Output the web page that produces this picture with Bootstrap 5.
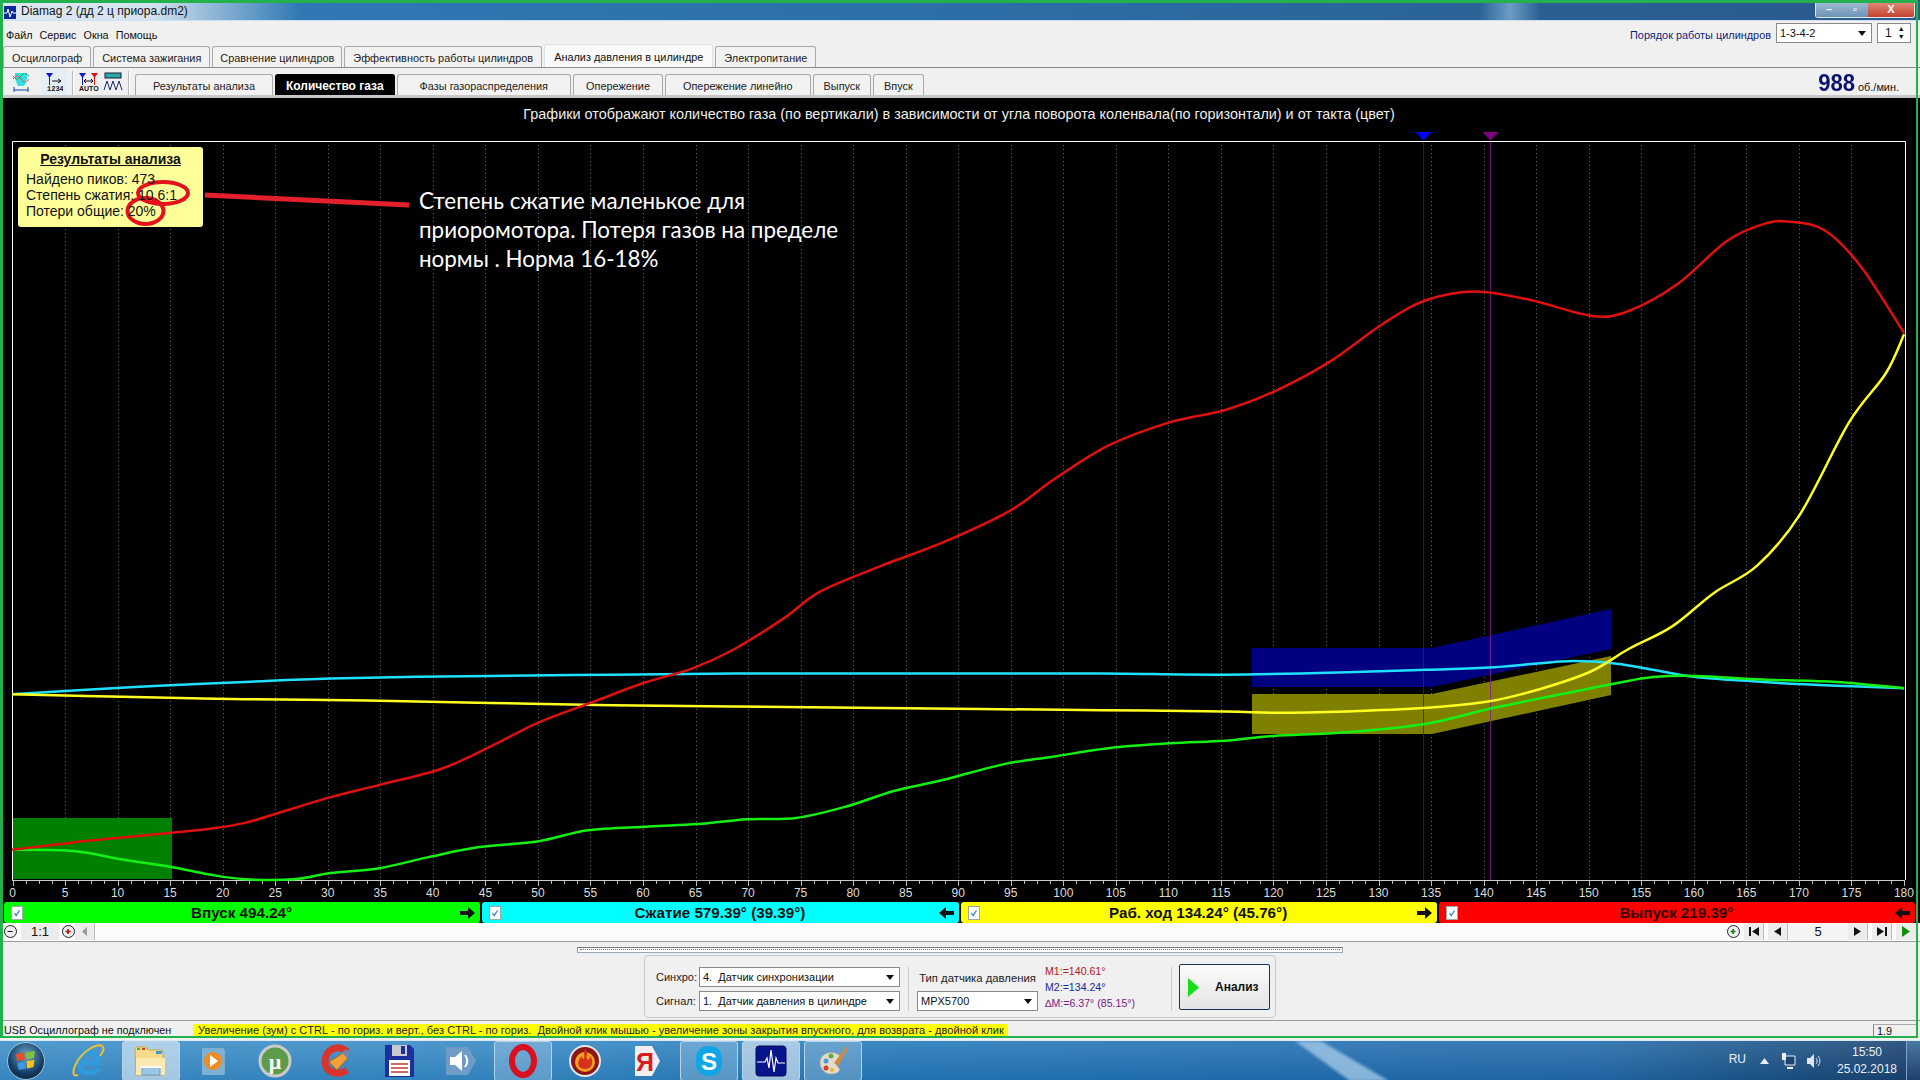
<!DOCTYPE html>
<html lang="ru">
<head>
  <meta charset="UTF-8">
  <title>Diamag 2</title>
  <link rel="stylesheet" href="https://cdn.jsdelivr.net/npm/bootstrap@5.3.0/dist/css/bootstrap.min.css">
  <style>
    html, body { margin: 0; width: 1920px; height: 1080px; overflow: hidden; background: #f0f0f0; }
    body { font-family: "Liberation Sans", Arial, sans-serif; font-size: 10.9px; color: #111; position: relative; }

    /* window chrome */
    .title-bar { height: 21px; padding-top: 2px; padding-left: 4px; background: linear-gradient(90deg, #dce8f3 0, #d5e3f0 150px, #2f78b4 300px, #2c70aa 900px, #2b6397 1480px, #6d9cc4 1510px, #2b5f94 1540px, #2b5a8e 1900px); border-bottom: 1px solid #cfe0ee; }
    .title-text { font-size: 12px; color: #111; margin-left: 5px; }
    .win-btns { height: 16px; margin-right: 5px; border: 1px solid #dfe9f2; border-top: 0; border-radius: 0 0 3px 3px; overflow: hidden; }
    .win-btns span { display: block; width: 26px; height: 100%; background: linear-gradient(#9fbbd4, #6d93b5); color: #fff; font-size: 11px; line-height: 14px; text-align: center; font-weight: bold; }
    .win-btns .win-close { width: 46px; background: linear-gradient(#e28a7d, #c4432f); }
    .menu-row { height: 25px; padding: 2px 9px 0 6px; }
    .menu-row a { color: #111; text-decoration: none; margin-right: 7px; font-size: 10.8px; }
    .order-label { color: #0d1f7a; margin-right: 5px; }
    .pick { appearance: none; -webkit-appearance: none; border-radius: 0; border: 1px solid #8a8a8a; padding: 0 3px; font-size: 11px; line-height: 16px; color: #111; background-color: #fff; background-position: right 5px center; background-size: 8px 5px; background-repeat: no-repeat; background-image: url("data:image/svg+xml,%3Csvg xmlns='http://www.w3.org/2000/svg' viewBox='0 0 8 5'%3E%3Cpath d='M0 0h8L4 5z' fill='%23111'/%3E%3C/svg%3E"); }
    .pick:focus { box-shadow: none; border-color: #8a8a8a; }
    .pick-order { width: 96px; height: 20px; }
    .spin-box { width: 34px; height: 20px; margin-left: 5px; border: 1px solid #8a8a8a; background: #fff; padding-left: 7px; line-height: 18px; font-size: 12px; }
    .spin-arrows { font-size: 7px; line-height: 8px; text-align: center; margin-top: 1px; margin-left: 6px; }

    /* tabs */
    .tab-row { height: 22px; padding-left: 3px; border-bottom: 1px solid #8c8c8c; }
    .tab-row.nav-tabs { --bs-nav-tabs-border-color: #8c8c8c; }
    .tab-row .nav-link, .tab-row2 .nav-link { height: 21px; padding: 3px 8px 0; margin: 0 2px 0 0; font-size: 10.9px; color: #222; background: #f2f2f2; border: 1px solid #a8a8a8; border-bottom: 0; border-radius: 3px 3px 0 0; white-space: nowrap; }
    .tab-row li:nth-child(3) .nav-link { padding: 3px 7px 0; }
    .tab-row .nav-link.active { background: #fafafa; height: 23px; margin-top: -2px; padding: 4px 9px 0; color: #111; }
    .tool-row { height: 30px; padding-left: 9px; background: #f0f0f0; border-bottom: 3px solid #c8c8c8; }
    .tab-row2 { margin-left: 0; padding-top: 6px; border: 0; flex-wrap: nowrap; }
    .tab-row2 .nav-link { padding: 3px 17px 0; }
    .tab-row2 li:nth-child(3) .nav-link { padding: 3px 22px 0; }
    .tab-row2 li:nth-child(4) .nav-link { padding: 3px 12px 0; }
    .tab-row2 li:nth-child(6) .nav-link { padding: 3px 10px 0; }
    .tab-row2 li:nth-child(7) .nav-link { padding: 3px 10px 0; }
    .tab-row2 .nav-link.active { background: #000; color: #fff; font-weight: bold; font-size: 12px; border-color: #000; padding: 2px 10px 0; }
    .tool-ico { display: block; margin-top: 4px; }
    .tool-pressed { background: #e4eef7; }
    .tool-gap { width: 2px; height: 24px; margin: 3px 5px 0; border-left: 1px solid #bbb; border-right: 1px solid #fff; }
    .rpm { margin-left: auto; padding-right: 21px; padding-top: 1px; color: #111; line-height: 28px; white-space: nowrap; }
    .rpm b { font-size: 24px; color: #0a1470; transform: scaleX(.92); display: inline-block; transform-origin: right center; }

    /* plot */
    .scope-area { height: 804px; background: #000; position: relative; color: #fff; }
    .scope-caption { height: 34px; line-height: 32px; padding-right: 2px; text-align: center; font-size: 14.4px; color: #eee; white-space: nowrap; }
    .scope-svg { display: block; }
    .result-box { position: absolute; left: 18px; top: 49px; width: 185px; height: 80px; background: #ffff99; border-radius: 3px; color: #111; font-size: 14px; line-height: 16px; padding: 4px 0 0 8px; }
    .result-box h6 { margin: 0 0 4px -8px; text-align: center; font-size: 14px; line-height: 16px; font-weight: bold; text-decoration: underline; }
    .result-box div { position: relative; z-index: 2; }
    .marks-svg { position: absolute; left: 0; top: 0; pointer-events: none; }
    .note-text { position: absolute; left: 419px; top: 88px; width: 460px; font-family: Lato, "Open Sans", sans-serif; font-size: 22.4px; line-height: 29px; color: #fff; }

    /* phase bars */
    .phase-row { height: 21px; background: #000; padding-left: 4px; padding-right: 5px; gap: 2px; }
    .phase-bar { flex: 1; border-radius: 3px; padding: 0 5px 0 7px; font-weight: bold; font-size: 15.2px; line-height: 21px; color: #111; }
    .phase-bar .ph-name { flex: 1; text-align: center; }
    .ph-check { width: 12px; height: 14px; background: #fff; border: 1px solid #9aa; display: block; }
    .phase-green { background: #00ff00; }
    .phase-cyan { background: #00ffff; }
    .phase-yellow { background: #ffff00; }
    .phase-red { background: #ff0000; color: #300; }

    /* scroll strip */
    .scroll-row { height: 18px; background: #fbfbfb; border-bottom: 1px solid #9a9a9a; box-sizing: content-box; }
    .round-btn { width: 13px; height: 13px; border: 1px solid #222; border-radius: 50%; background: #eee; display: block; margin-top: 2px; }
    .round-first { margin-left: 4px; }
    .square-btn { width: 20px; height: 17px; background: #ececec; border-right: 1px solid #bbb; }
    .zoom-one { width: 38px; height: 17px; background: #ececec; font-size: 13px; line-height: 18px; text-align: center; margin: 0 3px 0 4px; }
    .page-num { width: 60px; text-align: center; font-size: 13px; line-height: 18px; background: #f4f4f4; }
    .square-plain { border: 0; }

    /* control panel */
    .bottom-area { height: 79px; background: #f0f0f0; border-bottom: 1px solid #9a9a9a; }
    .splitter { width: 766px; height: 6px; margin-top: 5px; border: 1px solid #9aa7b5; background: #fff; border-top-color: #777; position: relative; }
    .splitter::before { content: ""; position: absolute; left: 2px; right: 2px; top: 1px; border-top: 1px dotted #4a86c8; }
    .ctl-panel { width: 632px; height: 63px; margin-top: 2px; border: 1px solid #c8c8c8; border-radius: 4px; padding: 11px 0 0 11px; }
    .ctl-label { width: 43px; font-size: 11px; line-height: 20px; color: #222; }
    .pick-signal { width: 201px; height: 20px; }
    .pick-sensor { width: 121px; height: 20px; }
    .ctl-gap { height: 24px; }
    .ctl-sep { width: 1px; height: 44px; background: #ccc; }
    .sensor-col { width: 121px; margin: 0 8px; }
    .sensor-title { height: 24px; padding-top: 3px; font-size: 11.3px; white-space: nowrap; color: #222; text-align: center; }
    .mark-col { width: 126px; font-size: 10.6px; line-height: 16px; margin-top: -4px; margin-left: -1px; }
    .mark-one { color: #b01818; }
    .mark-two { color: #1a2aa0; }
    .mark-delta { color: #7a1a8a; }
    .run-btn { width: 91px; height: 46px; margin: -3px 0 0 7px; padding: 0; border: 1px solid #12365c; border-radius: 2px; background: linear-gradient(#fbfbfb, #e4e4e2); font-weight: bold; font-size: 12px; color: #111; --bs-btn-hover-bg: #eee; }
    .status-row { height: 16px; padding: 3px 0 0 4px; line-height: 12px; background: #f0f0f0; white-space: nowrap; }
    .status-usb { width: 189px; font-size: 10.8px; }
    .status-hint { background: #ffff00; width: 815px; height: 13px; overflow: hidden; font-size: 11.1px; padding-left: 5px; color: #222; }
    .status-ver { margin-left: auto; width: 43px; margin-right: 4px; border-left: 1px solid #888; border-top: 1px solid #aaa; padding-left: 3px; height: 13px; }
    .window-frame { position: absolute; left: 0; top: 0; width: 1918px; height: 1038px; border: solid #22b14c; border-width: 3px 2px 2px 3px; pointer-events: none; z-index: 5; }

    /* taskbar */
    .task-bar { position: absolute; left: 0; right: 0; top: 1040px; height: 40px; border-top: 1px solid #dbe9f4; background: linear-gradient(180deg, rgba(255,255,255,.12), rgba(0,0,0,.05)), linear-gradient(90deg, #3b8dc9 0, #3488c5 480px, #2377b8 900px, #1f6eb1 1300px, #2069aa 1600px, #1a4f82 1800px, #17406e 1920px); overflow: hidden; }
    .task-streak { position: absolute; left: 1290px; top: 0; filter: blur(1.5px); }
    .task-start { width: 58px; }
    .task-start svg { display: block; margin-left: 5px; }
    .task-slot { width: 62px; height: 40px; padding-top: 3px; text-align: center; position: relative; }
    .task-slot svg { display: block; margin: 0 auto; }
    .slot-on::before { content: ""; position: absolute; left: 2px; right: 2px; top: 0; bottom: 0; border: 1px solid #b7d3e8; border-radius: 3px; background: rgba(255,255,255,.22); }
    .slot-on svg { position: relative; }
    .slot-on.slot-hot::before { background: rgba(255,255,255,.55); }
    .tray-box { margin-left: auto; padding-top: 1px; color: #eaf2fa; font-size: 12px; }
    .tray-lang { margin-right: 14px; margin-top: -4px; }
    .tray-arrow { margin-right: 12px; }
    .tray-net { margin-right: 10px; }
    .tray-time { width: 68px; text-align: center; line-height: 17px; margin-left: 12px; }
    .show-desk { width: 14px; height: 40px; margin-left: 5px; border-left: 1px solid #7ea3c6; background: linear-gradient(#4a78a4, #1c3f68); }
  </style>
</head>
<body>
  <div class="title-bar d-flex align-items-start">
    <svg class="mt-1" width="12" height="13" viewBox="0 0 12 13"><rect width="12" height="13" fill="#0a2a9a"/><path d="M0 7h3l1-4 2 8 2-6 1 2h3" fill="none" stroke="#fff"/></svg>
    <span class="title-text">Diamag 2 (дд 2 ц приора.dm2)</span>
    <div class="win-btns d-flex ms-auto"><span>–</span><span>▫</span><span class="win-close">X</span></div>
  </div>

  <div class="menu-row d-flex">
    <nav class="pt-1"><a href="#">Файл</a><a href="#">Сервис</a><a href="#">Окна</a><a href="#">Помощь</a></nav>
    <div class="d-flex ms-auto">
      <span class="order-label pt-1">Порядок работы цилиндров</span>
      <select class="form-select pick pick-order"><option>1-3-4-2</option></select>
      <div class="spin-box d-flex">1<div class="spin-arrows">▲<br>▼</div></div>
    </div>
  </div>

  <ul class="nav nav-tabs tab-row">
    <li class="nav-item"><a class="nav-link" href="#">Осциллограф</a></li>
    <li class="nav-item"><a class="nav-link" href="#">Система зажигания</a></li>
    <li class="nav-item"><a class="nav-link" href="#">Сравнение цилиндров</a></li>
    <li class="nav-item"><a class="nav-link" href="#">Эффективность работы цилиндров</a></li>
    <li class="nav-item"><a class="nav-link active" href="#">Анализ давления в цилиндре</a></li>
    <li class="nav-item"><a class="nav-link" href="#">Электропитание</a></li>
  </ul>

  <div class="tool-row d-flex">
    <svg class="tool-ico" width="24" height="20" viewBox="0 0 24 20"><path d="M6 1h12v6l-3 7h-6L6 7z" fill="#33e0e0"/><path d="M4 7c3-4 5-4 8 0s5 4 8 0" fill="none" stroke="#d33" stroke-dasharray="2 1"/><path d="M4 4c3 4 5 4 8 0s5-3 8 0" fill="none" stroke="#2a8a2a" stroke-dasharray="2 1"/><path d="M5 18h14M5 15v5M19 15v5" stroke="#123fae" fill="none"/></svg>
    <div class="tool-pressed ms-2 px-1"><svg class="tool-ico" width="18" height="20" viewBox="0 0 18 20"><path d="M1 1h7L4.500 6z" fill="#1515c8"/><path d="M4.500 5v8" stroke="#1515c8"/><path d="M7 9h8M13 7l3 2-3 2" stroke="#111" fill="none"/><text x="2" y="19" font-size="7" font-weight="bold" font-family="Liberation Mono" fill="#111">1234</text></svg></div>
    <div class="tool-gap"></div>
    <svg class="tool-ico" width="20" height="20" viewBox="0 0 20 20"><path d="M0 1h7L3.500 6z" fill="#1515c8"/><path d="M3.500 5v8" stroke="#1515c8"/><path d="M12 1h7l-3.500 5z" fill="#d81818"/><path d="M15.500 5v8" stroke="#d81818"/><path d="M6 9h7M5 9l2-2M5 9l2 2M14 9l-2-2M14 9l-2 2" stroke="#111"/><text x="0" y="19" font-size="7" font-weight="bold" fill="#111">AUTO</text></svg>
    <svg class="tool-ico ms-1" width="20" height="20" viewBox="0 0 20 20"><rect x="2" y="1" width="16" height="5" fill="#2aa7a7" stroke="#123"/><path d="M1 18l3-9 3 9 3-9 3 9 3-9 3 9" fill="none" stroke="#1c2c6a"/></svg>
    <div class="tool-gap"></div>
    <ul class="nav tab-row2">
      <li class="nav-item"><a class="nav-link" href="#">Результаты анализа</a></li>
      <li class="nav-item"><a class="nav-link active" href="#">Количество газа</a></li>
      <li class="nav-item"><a class="nav-link" href="#">Фазы газораспределения</a></li>
      <li class="nav-item"><a class="nav-link" href="#">Опережение</a></li>
      <li class="nav-item"><a class="nav-link" href="#">Опережение линейно</a></li>
      <li class="nav-item"><a class="nav-link" href="#">Выпуск</a></li>
      <li class="nav-item"><a class="nav-link" href="#">Впуск</a></li>
    </ul>
    <div class="rpm"><b>988</b> об./мин.</div>
  </div>

  <div class="scope-area">
    <div class="scope-caption">Графики отображают количество газа (по вертикали) в зависимости от угла поворота коленвала(по горизонтали) и от такта (цвет)</div>
    <svg class="scope-svg" id="plot" width="1920" height="770" viewBox="0 132 1920 770"></svg>
    <div class="result-box">
      <h6>Результаты анализа</h6>
      <div>Найдено пиков: 473</div>
      <div>Степень сжатия: 10.6:1</div>
      <div>Потери общие: 20%</div>
    </div>
    <svg class="marks-svg" width="1920" height="300" viewBox="0 98 1920 300">
      <ellipse cx="163" cy="193" rx="25" ry="11" fill="none" stroke="#e4101c" stroke-width="4"/>
      <ellipse cx="145.500" cy="211" rx="18" ry="13" fill="none" stroke="#e4101c" stroke-width="4"/>
      <path d="M205 195L409 205" stroke="#e4202c" stroke-width="5"/>
    </svg>
    <div class="note-text">Степень сжатие маленькое для приоромотора. Потеря газов на пределе нормы . Норма 16-18%</div>
  </div>

  <div class="phase-row d-flex">
    <div class="phase-bar phase-green d-flex align-items-center">
      <svg class="ph-check" viewBox="0 0 12 14"><path d="M3 7l2 3 4-6" fill="none" stroke="#2f7fd0" stroke-width="1.500"/></svg>
      <span class="ph-name">Впуск 494.24°</span>
      <svg width="15" height="12" viewBox="0 0 15 12"><path d="M0 4h8V0l7 6-7 6V8H0z" fill="#111"/></svg>
    </div>
    <div class="phase-bar phase-cyan d-flex align-items-center">
      <svg class="ph-check" viewBox="0 0 12 14"><path d="M3 7l2 3 4-6" fill="none" stroke="#2f7fd0" stroke-width="1.500"/></svg>
      <span class="ph-name">Сжатие 579.39° (39.39°)</span>
      <svg width="15" height="12" viewBox="0 0 15 12"><path d="M15 4H7V0L0 6l7 6V8h8z" fill="#111"/></svg>
    </div>
    <div class="phase-bar phase-yellow d-flex align-items-center">
      <svg class="ph-check" viewBox="0 0 12 14"><path d="M3 7l2 3 4-6" fill="none" stroke="#2f7fd0" stroke-width="1.500"/></svg>
      <span class="ph-name">Раб. ход 134.24° (45.76°)</span>
      <svg width="15" height="12" viewBox="0 0 15 12"><path d="M0 4h8V0l7 6-7 6V8H0z" fill="#111"/></svg>
    </div>
    <div class="phase-bar phase-red d-flex align-items-center">
      <svg class="ph-check" viewBox="0 0 12 14"><path d="M3 7l2 3 4-6" fill="none" stroke="#2f7fd0" stroke-width="1.500"/></svg>
      <span class="ph-name">Выпуск 219.39°</span>
      <svg width="15" height="12" viewBox="0 0 15 12"><path d="M15 4H7V0L0 6l7 6V8h8z" fill="#111"/></svg>
    </div>
  </div>

  <div class="scroll-row d-flex">
    <svg class="round-btn round-first" viewBox="0 0 13 13"><path d="M3 6h6v1H3z" fill="#111"/></svg>
    <div class="zoom-one">1:1</div>
    <svg class="round-btn" viewBox="0 0 13 13"><path d="M3 5.500h6v2H3zM5 3.500h2v6H5z" fill="#b01818"/></svg>
    <div class="square-btn d-flex align-items-center justify-content-center"><svg width="5" height="9" viewBox="0 0 5 9"><path d="M5 0v9L0 4.500z" fill="#999"/></svg></div>
    <div class="d-flex ms-auto pe-1">
      <svg class="round-btn me-1" viewBox="0 0 13 13"><path d="M3 5.500h6v2H3zM5 3.500h2v6H5z" fill="#1a7a1a"/></svg>
      <div class="square-btn d-flex align-items-center justify-content-center"><svg width="10" height="9" viewBox="0 0 10 9"><path d="M0 0h2v9H0zM10 0v9L3 4.500z" fill="#111"/></svg></div>
      <div class="square-btn ms-1 d-flex align-items-center justify-content-center"><svg width="7" height="9" viewBox="0 0 7 9"><path d="M7 0v9L0 4.500z" fill="#111"/></svg></div>
      <div class="page-num">5</div>
      <div class="square-btn d-flex align-items-center justify-content-center"><svg width="7" height="9" viewBox="0 0 7 9"><path d="M0 0v9l7-4.500z" fill="#111"/></svg></div>
      <div class="square-btn ms-1 d-flex align-items-center justify-content-center"><svg width="10" height="9" viewBox="0 0 10 9"><path d="M10 0H8v9h2zM0 0v9l7-4.500z" fill="#111"/></svg></div>
      <div class="square-btn square-plain ms-1 d-flex align-items-center justify-content-center"><svg width="8" height="11" viewBox="0 0 8 11"><path d="M0 0v11l8-5.500z" fill="#0a8f0a"/></svg></div>
    </div>
  </div>

  <div class="bottom-area d-flex flex-column align-items-center">
    <div class="splitter"></div>
    <div class="ctl-panel d-flex">
      <div>
        <div class="d-flex ctl-gap"><span class="ctl-label">Синхро:</span><select class="form-select pick pick-signal"><option>4.&nbsp; Датчик синхронизации</option></select></div>
        <div class="d-flex"><span class="ctl-label">Сигнал:</span><select class="form-select pick pick-signal"><option>1.&nbsp; Датчик давления в цилиндре</option></select></div>
      </div>
      <div class="ctl-sep ms-2"></div>
      <div class="sensor-col">
        <div class="sensor-title">Тип датчика давления</div>
        <select class="form-select pick pick-sensor"><option>MPX5700</option></select>
      </div>
      <div class="mark-col">
        <div class="mark-one">M1:=140.61°</div>
        <div class="mark-two">M2:=134.24°</div>
        <div class="mark-delta">∆M:=6.37° (85.15°)</div>
      </div>
      <div class="ctl-sep"></div>
      <button type="button" class="btn run-btn d-flex align-items-center">
        <svg class="ms-2" width="11" height="19" viewBox="0 0 11 19"><path d="M0 0l11 9.500L0 19z" fill="#14e014"/></svg>
        <span class="ms-3">Анализ</span>
      </button>
    </div>
  </div>

  <div class="status-row d-flex">
    <div class="status-usb">USB Осциллограф не подключен</div>
    <div class="status-hint">Увеличение (зум) с CTRL - по гориз. и верт., без CTRL - по гориз.&nbsp; Двойной клик мышью - увеличение зоны закрытия впускного, для возврата - двойной клик</div>
    <div class="status-ver">1.9</div>
  </div>

  <div class="window-frame"></div>

  <div class="task-bar d-flex">
    <svg class="task-streak" width="110" height="40" viewBox="0 0 110 40"><path d="M5 0h26l68 40H60z" fill="#a9cdea" opacity=".75"/></svg>
    <div class="task-start">
      <svg width="40" height="40" viewBox="0 0 40 40">
        <defs><radialGradient id="orb" cx=".5" cy=".35" r=".7"><stop offset="0" stop-color="#6fa3c9"/><stop offset=".7" stop-color="#123c63"/><stop offset="1" stop-color="#0a2238"/></radialGradient></defs>
        <circle cx="21" cy="20" r="18.500" fill="url(#orb)" stroke="#9cc4e0"/>
        <path d="M11 13l8-1.500 1 7-8 1.500z" fill="#e8502a"/><path d="M21 11l9-1-1 7-7 1.500z" fill="#7cc23a"/><path d="M12 22l8-1.500 1 7-7 1.500z" fill="#3a9ae0"/><path d="M21.500 20l8-1-1 7-6.500 1.500z" fill="#f7c21c"/>
      </svg>
    </div>
    <div class="task-slot"><svg width="36" height="34" viewBox="0 0 36 34"><path d="M9 19H27C27 11 23 8 18 8 12 8 8 13 8 19 8 26 13 29 18 29 22 29 25 28 28 25" fill="none" stroke="#2f9ade" stroke-width="5"/><path d="M7 31C1 33 1 27 6 18 12 7 26-1 31 2c3 2 1 6-2 10" fill="none" stroke="#efc12e" stroke-width="2"/></svg></div>
    <div class="task-slot slot-on slot-hot"><svg width="36" height="34" viewBox="0 0 36 34"><path d="M2 6l1-3h10l2 3h13l2 1 1 24H3z" fill="#f6dc8a" stroke="#c8a94e"/><path d="M4 4h3v2H4z" fill="#35b33a"/><path d="M9 4h3v2H9z" fill="#d83a2a"/><path d="M23 7h6v3h-6z" fill="#3a9ae0"/><path d="M3 14h29v17H3z" fill="#fbeab0"/><path d="M9 23h18v8H9z" fill="#9cc8e8" stroke="#6a9cc4"/><path d="M7 23h22" stroke="#fff" stroke-width="2"/></svg></div>
    <div class="task-slot"><svg width="30" height="34" viewBox="0 0 30 34"><path d="M24 6h3v24h-3z" fill="#7fa9c8"/><rect x="4" y="4" width="22" height="27" rx="1" fill="#7fb0d4"/><circle cx="15" cy="17" r="9" fill="#f08c1e"/><path d="M12 11l8 6-8 6z" fill="#fff"/></svg></div>
    <div class="task-slot"><svg width="34" height="34" viewBox="0 0 34 34"><circle cx="17" cy="17" r="15" fill="#5d9a4a" stroke="#c8ccc8" stroke-width="3"/><text x="17" y="25" text-anchor="middle" font-size="22" font-weight="bold" font-family="Liberation Serif" fill="#fff">µ</text></svg></div>
    <div class="task-slot"><svg width="34" height="34" viewBox="0 0 34 34"><path d="M27 8C18-1 5 6 5 17c0 11 12 16 22 9" fill="none" stroke="#d8342c" stroke-width="7"/><path d="M9 18l14-9 5 5-11 12z" fill="#f0a13c" stroke="#a86a1e"/><path d="M22 9l4-4 4 4-3 5z" fill="#6a8ab0"/></svg></div>
    <div class="task-slot"><svg width="32" height="34" viewBox="0 0 32 34"><path d="M2 1h25l4 4v28H2z" fill="#1c2fa0"/><path d="M9 1h15v11H9z" fill="#c8c8d0"/><path d="M18 2h4v8h-4z" fill="#1c2fa0"/><path d="M6 16h21v16H6z" fill="#fff"/><path d="M8 20h17M8 24h17M8 28h17" stroke="#c8352c" stroke-width="1.500"/></svg></div>
    <div class="task-slot"><svg width="32" height="34" viewBox="0 0 32 34"><path d="M1 3h22l8 14-8 14H1z" fill="#6f9cc6"/><path d="M5 13h5l7-6v20l-7-6H5z" fill="#fff"/><path d="M20 11c3 4 3 8 0 12" fill="none" stroke="#fff" stroke-width="2"/></svg></div>
    <div class="task-slot slot-on"><svg width="34" height="34" viewBox="0 0 34 34"><ellipse cx="17" cy="17" rx="11" ry="14" fill="none" stroke="#d9101e" stroke-width="6"/></svg></div>
    <div class="task-slot"><svg width="34" height="34" viewBox="0 0 34 34"><circle cx="17" cy="17" r="15" fill="#8c1616" stroke="#e8e8e8" stroke-width="2"/><circle cx="17" cy="18" r="10" fill="#f2a01e"/><path d="M17 5c5 5-1 7 3 11 2-1 2-3 2-4 4 5 3 13-5 13S8 17 14 12c0 2 1 3 2 3 1-4-1-6 1-10z" fill="#d8321c"/></svg></div>
    <div class="task-slot"><svg width="30" height="34" viewBox="0 0 30 34"><path d="M3 2h17l8 15-8 15H3z" fill="#f0eeee"/><text x="13" y="27" text-anchor="middle" font-size="25" font-weight="bold" font-family="Liberation Sans" fill="#d81e1e">Я</text></svg></div>
    <div class="task-slot slot-on"><svg width="34" height="34" viewBox="0 0 34 34"><rect x="4" y="2" width="26" height="30" rx="12" fill="#0fa5e6"/><text x="17" y="26" text-anchor="middle" font-size="24" font-weight="bold" font-family="Liberation Sans" fill="#fff">S</text></svg></div>
    <div class="task-slot slot-on slot-hot"><svg width="34" height="34" viewBox="0 0 34 34"><rect x="2" y="2" width="30" height="30" rx="3" fill="#08148c" stroke="#0a0a50"/><path d="M3 18h8l2-4 2 10 2-18 3 22 2-14 2 5h7" fill="none" stroke="#fff" stroke-width="1.200"/></svg></div>
    <div class="task-slot slot-on"><svg width="34" height="34" viewBox="0 0 34 34"><path d="M4 19c0-9 9-12 15-10 7 2 8 7 4 9-3 1-3 4 0 6 2 3-2 6-8 6-6 0-11-5-11-11z" fill="#e2dcc8" stroke="#aaa"/><circle cx="10" cy="17" r="2.500" fill="#4a9ad8"/><circle cx="15" cy="12" r="2.500" fill="#5ab04a"/><circle cx="10" cy="24" r="2.500" fill="#d8402a"/><circle cx="16" cy="26" r="2" fill="#e8b82a"/><path d="M18 19L30 3l2 1-10 18z" fill="#d08a3a"/></svg></div>
    <div class="tray-box d-flex align-items-center">
      <span class="tray-lang">RU</span>
      <svg class="tray-arrow" width="9" height="6" viewBox="0 0 9 6"><path d="M0 6l4.500-6L9 6z" fill="#e8eef4"/></svg>
      <svg class="tray-net" width="15" height="18" viewBox="0 0 15 18"><path d="M4 4h10v9H4z" fill="#1a4570" stroke="#eef"/><path d="M1 1h4v7H1zM6 15h6v2H6z" fill="#eef"/></svg>
      <svg width="15" height="16" viewBox="0 0 15 16"><path d="M1 5h3l4-4v14l-4-4H1z" fill="#dfe8f0"/><path d="M10 5c1.500 2 1.500 4 0 6M12 3c2.500 3 2.500 7 0 10" fill="none" stroke="#dfe8f0"/></svg>
      <div class="tray-time">15:50<br>25.02.2018</div>
      <div class="show-desk"></div>
    </div>
  </div>

  <script>
    // build the plot: points were read off the picture at 1568 wide, so scale them up
    const K = 1920 / 1568;
    const X0 = 12.5, STEP = 52.54, TOP = 141, BOTTOM = 880;

    const red = [[10,694],[60,688],[100,684],[140,680],[170,677],[200,672],[240,660],[270,651],[310,641],[360,628],[400,610],[440,590],[485,573],[525,558],[565,546],[600,530],[640,505],[670,483],[720,462],[770,443],[825,417],[860,392],[905,364],[955,345],[1000,335],[1040,320],[1085,296],[1130,264],[1165,245],[1205,238],[1250,245],[1300,258],[1330,254],[1370,232],[1410,197],[1440,183],[1460,181],[1490,188],[1520,218],[1555,272]];
    const yellow = [[10,567],[100,569],[200,571],[300,572],[400,574],[500,576],[600,577],[700,578],[800,579],[900,580],[1000,581],[1040,582],[1100,581],[1165,578],[1215,573],[1260,562],[1300,548],[1330,530],[1365,512],[1400,484],[1435,462],[1470,420],[1510,345],[1540,305],[1555,273]];
    const cyan = [[10,567],[60,564],[130,560],[200,557],[270,554],[400,552],[500,551],[600,550],[700,550],[800,550],[900,550],[1000,551],[1100,549],[1165,547],[1220,545],[1280,540],[1320,542],[1350,547],[1385,553],[1440,557],[1500,560],[1555,562]];
    const green = [[10,694],[60,695],[100,702],[140,708],[170,714],[200,718],[240,718],[270,713],[310,709],[350,700],[390,692],[440,687],[480,678],[530,675],[570,673],[610,669],[650,668],[690,659],[730,646],[770,637],[820,624],[860,618],[905,611],[955,607],[1000,605],[1040,601],[1100,598],[1165,591],[1220,578],[1280,566],[1320,558],[1350,553],[1385,552],[1440,555],[1500,557],[1555,562]];

    // Catmull-Rom through the points, as a bezier path
    function curve(pts) {
      const p = pts.map(a => [a[0] * K, a[1] * K]);
      let d = "M" + p[0][0].toFixed(1) + " " + p[0][1].toFixed(1);
      for (let i = 0; i < p.length - 1; i++) {
        const a = p[Math.max(i - 1, 0)], b = p[i], c = p[i + 1], e = p[Math.min(i + 2, p.length - 1)];
        d += "C" + (b[0] + (c[0] - a[0]) / 6).toFixed(1) + " " + (b[1] + (c[1] - a[1]) / 6).toFixed(1) + " " +
             (c[0] - (e[0] - b[0]) / 6).toFixed(1) + " " + (c[1] - (e[1] - b[1]) / 6).toFixed(1) + " " +
             c[0].toFixed(1) + " " + c[1].toFixed(1);
      }
      return d;
    }

    let s = "";
    for (let i = 1; i < 36; i++) {
      const x = Math.round(X0 + i * STEP) + 0.5;
      s += `<path d="M${x} ${TOP}V${BOTTOM}" stroke="#6a6a6a" stroke-dasharray="1 3"/>`;
    }
    s += `<rect x="13" y="818" width="159" height="61" fill="#008000"/>`;
    s += `<path d="M1252 648H1432L1611 609V649L1432 687H1252z" fill="#000080"/>`;
    s += `<path d="M1252 694H1432L1611 656V695L1432 734H1252z" fill="#808000"/>`;
    s += `<path d="M1423.500 141V880" stroke="#1c1cb4" stroke-opacity=".8"/>`;
    s += `<path d="M1490.500 141V880" stroke="#8a1a8a" stroke-opacity=".8"/>`;
    s += `<path d="M1415.500 132h16l-8 8.500z" fill="#0000ff"/><path d="M1482.500 132h16l-8 8.500z" fill="#800080"/>`;
    s += `<path d="M12.500 880V141.500H1905.500V880" fill="none" stroke="#fff"/>`;
    s += `<path d="M12 880.500H1905" stroke="#ccc"/>`;
    for (let i = 0; i <= 144; i++) {
      const x = Math.round(X0 + i * STEP / 4) + 0.5;
      s += `<path d="M${x} 881v${i % 4 ? 3 : 5}" stroke="#bbb"/>`;
    }
    for (let i = 0; i <= 36; i++) {
      s += `<text x="${(X0 + i * STEP).toFixed(1)}" y="897" text-anchor="middle" font-size="12" font-family="Liberation Sans" fill="#ddd">${i * 5}</text>`;
    }
    s += `<path d="${curve(cyan)}" fill="none" stroke="#20e0ff" stroke-width="2.500"/>`;
    s += `<path d="${curve(green)}" fill="none" stroke="#14f014" stroke-width="2.500"/>`;
    s += `<path d="${curve(yellow)}" fill="none" stroke="#ffff20" stroke-width="2.500"/>`;
    s += `<path d="${curve(red)}" fill="none" stroke="#e01010" stroke-width="2.500"/>`;
    document.getElementById("plot").innerHTML = s;
  </script>
  <script src="https://cdn.jsdelivr.net/npm/bootstrap@5.3.0/dist/js/bootstrap.bundle.min.js"></script>
</body>
</html>
